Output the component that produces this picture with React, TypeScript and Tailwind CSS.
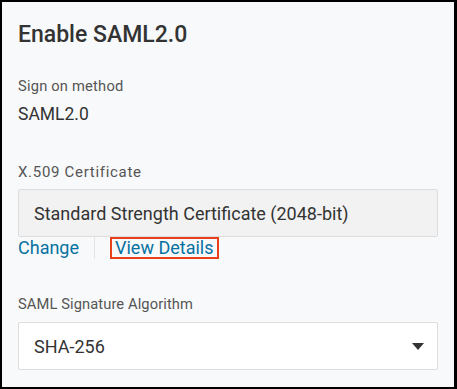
import React from 'react';

export default function App() {
  return (
    <div className="w-[457px] h-[389px] border-2 border-r-[3px] border-black bg-[#f8f9fa] font-['Roboto',sans-serif] text-[#333]">
      <div className="px-4 pt-[19px]">
        <h2 className="text-[23px] leading-[28px] font-medium text-[#333]">Enable SAML2.0</h2>

        <div className="mt-[27px] text-[14.7px] leading-[20px] text-[#555] tracking-[0.2px]">Sign on method</div>
        <div className="mt-2 text-[17.5px] leading-[20px] text-[#333]">SAML2.0</div>

        <div className="mt-[38px] text-[15px] leading-[20px] text-[#555] tracking-[0.7px]">X.509 Certificate</div>
        <div className="mt-[7px] h-[48px] flex items-center px-[15px] bg-[#f2f2f2] border border-[#dddddd] rounded-[2px] text-[18px] text-[#333]">
          Standard Strength Certificate (2048-bit)
        </div>
        <div className="flex items-stretch h-[22px] text-[18px] text-[#0772a1]">
          <a className="pr-[15px] leading-[22px]">Change</a>
          <div className="w-px bg-[#e5e5e5]" />
          <a className="ml-[15px] pl-[3px] pr-[4px] border-2 border-[#e8401c] leading-[18px]">View Details</a>
        </div>

        <div className="mt-[35px] text-[14.7px] leading-[20px] text-[#555] tracking-[0.1px]">SAML Signature Algorithm</div>
        <div className="mt-[8px] h-[48px] flex items-center justify-between pl-[15px] pr-[13px] bg-white border border-[#dddddd] rounded-[2px] text-[18px] text-[#333]">
          <span>SHA-256</span>
          <svg width="12" height="7" viewBox="0 0 12 7">
            <path d="M0 0h12L6 7z" fill="#333" />
          </svg>
        </div>
      </div>
    </div>
  );
}
